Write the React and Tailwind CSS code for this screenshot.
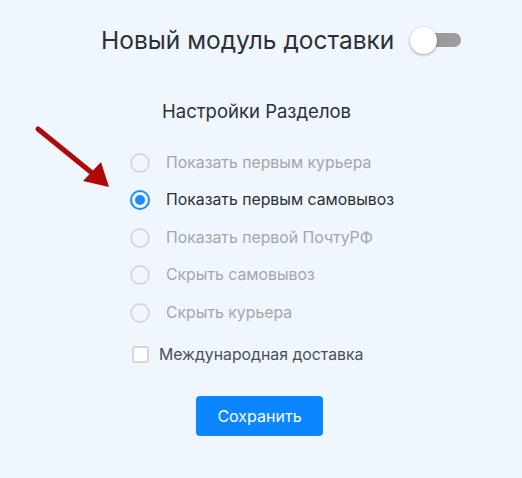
import React, { useState } from 'react';

const options = [
  'Показать первым курьера',
  'Показать первым самовывоз',
  'Показать первой ПочтуРФ',
  'Скрыть самовывоз',
  'Скрыть курьера',
];

function Radio({ checked, label }) {
  return (
    <label className="flex items-center h-[37.5px] cursor-pointer">
      <span
        className={
          'w-[20px] h-[20px] rounded-full flex items-center justify-center ' +
          (checked ? 'border-2 border-[#1a8cff]' : 'border-2 border-[#d6d9dc]')
        }
      >
        {checked && <span className="w-[10px] h-[10px] rounded-full bg-[#1a8cff]" />}
      </span>
      <span className={'ml-[16px] text-[15.8px] ' + (checked ? 'text-[#2b2f33]' : 'text-[#a3a6a9]')}>
        {label}
      </span>
    </label>
  );
}

export default function App() {
  const [selected] = useState(1);

  return (
    <div
      className="relative w-[522px] h-[478px] bg-[#f0f6fd] overflow-hidden"
      style={{ fontFamily: 'Inter, "Noto Sans", sans-serif' }}
    >
      {/* стрелка-указатель */}
      <svg className="absolute left-0 top-0" width="522" height="478" viewBox="0 0 522 478">
        <line x1="38" y1="129" x2="97" y2="177" stroke="#b00808" strokeWidth="5" strokeLinecap="round" />
        <polygon points="109,187 83,181 101,162" fill="#b00808" />
      </svg>

      <div className="flex items-center pl-[101px] pt-[24px]">
        <h1 className="text-[24.5px] leading-[32px] text-[#2b3036]">Новый модуль доставки</h1>
        <div className="relative ml-[16px] w-[51px] h-[28px] flex items-center">
          <span className="absolute left-[4px] right-0 h-[14px] rounded-full bg-[#9c9c9c]" />
          <span className="absolute left-0 w-[27px] h-[27px] rounded-full bg-white shadow-[0_1px_3px_rgba(0,0,0,0.35)]" />
        </div>
      </div>

      <h2 className="mt-[42px] pl-[162px] text-[18.5px] leading-[26px] text-[#2b3036]">Настройки Разделов</h2>

      <div className="mt-[20px] pl-[130px] flex flex-col">
        {options.map((o, i) => (
          <Radio key={o} checked={i === selected} label={o} />
        ))}
      </div>

      <label className="mt-[11px] pl-[132px] flex items-center">
        <span className="w-[17px] h-[17px] border-2 border-[#d6d9dc] rounded-[2px] bg-white" />
        <span className="ml-[10px] text-[15.8px] text-[#4a4f55]">Международная доставка</span>
      </label>

      <div className="mt-[30px] pl-[196px]">
        <button className="w-[127px] h-[40px] rounded-[4px] bg-[#0b86ff] text-white text-[16px]">Сохранить</button>
      </div>
    </div>
  );
}
